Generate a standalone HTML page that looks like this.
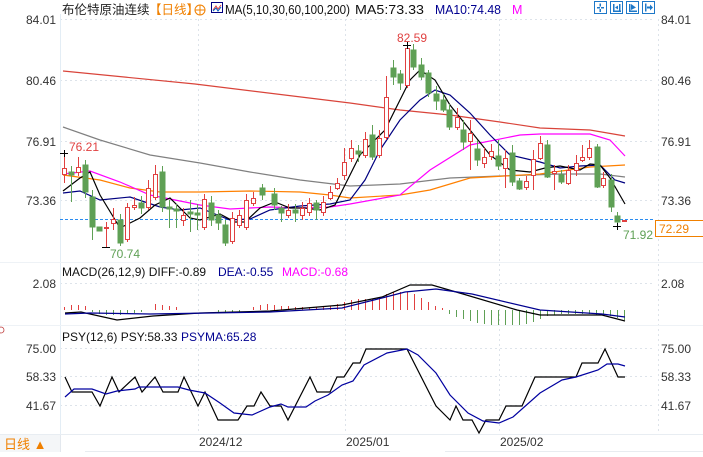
<!DOCTYPE html>
<html><head><meta charset="utf-8"><style>
html,body{margin:0;padding:0;background:#fff;}
body{width:703px;height:452px;overflow:hidden;position:relative;}
svg text{font-family:"Liberation Sans","Noto Sans CJK SC",sans-serif;}
</style></head><body>
<svg width="703" height="452" viewBox="0 0 703 452" xmlns="http://www.w3.org/2000/svg">
<g stroke="#dde3ea" stroke-width="1" stroke-dasharray="2,3" fill="none">
<line x1="60" y1="19.5" x2="655" y2="19.5"/><line x1="60" y1="80.5" x2="655" y2="80.5"/>
<line x1="60" y1="141.5" x2="655" y2="141.5"/><line x1="60" y1="200.5" x2="655" y2="200.5"/>
<line x1="60" y1="283.5" x2="655" y2="283.5"/>
<line x1="60" y1="348.5" x2="655" y2="348.5"/><line x1="60" y1="376.5" x2="655" y2="376.5"/><line x1="60" y1="405.5" x2="655" y2="405.5"/>
<line x1="198.5" y1="19" x2="198.5" y2="434"/><line x1="345.5" y1="19" x2="345.5" y2="434"/><line x1="499.5" y1="19" x2="499.5" y2="434"/>
<line x1="658.5" y1="19" x2="658.5" y2="434"/>
</g>
<line x1="60.5" y1="14" x2="60.5" y2="434" stroke="#e3edf5"/>
<line x1="0" y1="325.5" x2="703" y2="325.5" stroke="#eef2f6"/>
<line x1="0" y1="262.5" x2="703" y2="262.5" stroke="#eef2f6"/>
<line x1="0" y1="434.5" x2="703" y2="434.5" stroke="#e8edf2"/>
<g font-size="12" fill="#333" text-anchor="end">
<text x="56" y="24">84.01</text><text x="56" y="85">80.46</text><text x="56" y="146">76.91</text><text x="56" y="205">73.36</text>
<text x="56" y="288">2.08</text><text x="56" y="353">75.00</text><text x="56" y="381">58.33</text><text x="56" y="410">41.67</text>
</g>
<g font-size="12" fill="#333">
<text x="661" y="24">84.01</text><text x="661" y="85">80.46</text><text x="661" y="146">76.91</text><text x="661" y="205">73.36</text>
<text x="661" y="288">2.08</text><text x="661" y="353">75.00</text><text x="661" y="381">58.33</text><text x="661" y="410">41.67</text>
</g>
<line x1="60" y1="219.5" x2="655" y2="219.5" stroke="#2a8cf0" stroke-dasharray="3,2"/>
<rect x="655.5" y="220.5" width="48" height="16" fill="#fff" stroke="#f08000"/>
<text x="659" y="233" font-size="12" fill="#f08000">72.29</text>

<g fill="none" stroke-width="1.2">
<polyline stroke="#d9443a" points="63,71 195,84 350,103 400,110 450,115 500,122 540,128 590,130 625,136"/>
<polyline stroke="#808080" points="63,127 100,140 150,155 200,163 250,172 300,180 350,186 400,184 450,178 500,176 560,174 600,174 625,177"/>
<polyline stroke="#ff8000" points="63,175 100,180 130,188 160,192 200,192 250,191 300,192 330,195 350,198 400,195 430,190 470,178 540,174 590,167 625,165"/>
<polyline stroke="#ff00ff" points="63,174 90,171 120,182 150,195 200,205 230,209 270,207 300,208 330,207 350,204 400,195 430,170 470,145 520,135 540,134 590,134 610,140 625,156"/>
<polyline stroke="#000080" points="63,193 80,191 100,200 130,197 160,207 180,210 200,208 230,220 250,219 270,210 300,206 330,204 350,200 365,180 380,150 400,120 420,100 435,90 450,95 470,113 490,135 510,155 540,162 560,168 580,166 600,165 615,180 625,183"/>
<polyline stroke="#000" points="63,191 80,178 90,172 100,195 120,228 140,218 155,205 170,198 190,218 200,220 220,214 235,222 245,222 260,208 275,202 290,208 305,208 320,210 335,205 345,185 360,155 385,130 400,100 410,80 420,70 435,80 450,105 470,130 490,155 510,170 530,172 545,168 560,166 580,170 590,164 600,165 610,178 625,204"/>
</g>

<g stroke-width="1">
<g fill="#5fa055" stroke="#5fa055">
<line x1="71.5" y1="166" x2="71.5" y2="202"/><rect x="69" y="172" width="5" height="3"/>
<line x1="85.5" y1="160" x2="85.5" y2="198"/><rect x="83" y="165" width="5" height="27"/>
<line x1="92.5" y1="190" x2="92.5" y2="240"/><rect x="90" y="197" width="5" height="30"/>
<rect x="97" y="227" width="5" height="4"/>
<line x1="120.5" y1="214" x2="120.5" y2="246"/><rect x="118" y="220" width="5" height="23"/>
<line x1="141.5" y1="196" x2="141.5" y2="214"/><rect x="139" y="203" width="5" height="5"/>
<line x1="162.5" y1="166" x2="162.5" y2="212"/><rect x="160" y="172" width="5" height="35"/>
<line x1="169.5" y1="200" x2="169.5" y2="228"/><rect x="167" y="207" width="5" height="2"/>
<line x1="176.5" y1="204" x2="176.5" y2="228"/><rect x="174" y="209" width="5" height="2"/>
<line x1="190.5" y1="200" x2="190.5" y2="232"/><rect x="188" y="212" width="5" height="2"/>
<line x1="197.5" y1="204" x2="197.5" y2="230"/><rect x="195" y="213" width="5" height="2"/>
<line x1="211.5" y1="196" x2="211.5" y2="226"/><rect x="209" y="203" width="5" height="17"/>
<line x1="218.5" y1="210" x2="218.5" y2="230"/><rect x="216" y="215" width="5" height="8"/>
<line x1="225.5" y1="220" x2="225.5" y2="246"/><rect x="223" y="225" width="5" height="18"/>
<line x1="262.5" y1="184" x2="262.5" y2="200"/><rect x="260" y="188" width="5" height="7"/>
<line x1="274.5" y1="188" x2="274.5" y2="210"/><rect x="272" y="194" width="5" height="11"/>
<line x1="281.5" y1="206" x2="281.5" y2="222"/><rect x="279" y="208" width="5" height="5"/>
<line x1="295.5" y1="204" x2="295.5" y2="222"/><rect x="293" y="210" width="5" height="3"/>
<line x1="316.5" y1="200" x2="316.5" y2="220"/><rect x="314" y="203" width="5" height="7"/>
<line x1="358.5" y1="145" x2="358.5" y2="162"/><rect x="356" y="151" width="5" height="3"/>
<line x1="372.5" y1="125" x2="372.5" y2="160"/><rect x="370" y="135" width="5" height="22"/>
<line x1="393.5" y1="60" x2="393.5" y2="85"/><rect x="391" y="68" width="5" height="9"/>
<line x1="400.5" y1="70" x2="400.5" y2="90"/><rect x="398" y="74" width="5" height="9"/>
<line x1="413.5" y1="44" x2="413.5" y2="70"/><rect x="411" y="50" width="5" height="17"/>
<line x1="421.5" y1="58" x2="421.5" y2="80"/><rect x="419" y="65" width="5" height="12"/>
<line x1="428.5" y1="70" x2="428.5" y2="97"/><rect x="426" y="73" width="5" height="20"/>
<line x1="436.5" y1="86" x2="436.5" y2="110"/><rect x="434" y="94" width="5" height="7"/>
<line x1="443.5" y1="94" x2="443.5" y2="112"/><rect x="441" y="100" width="5" height="10"/>
<line x1="449.5" y1="104" x2="449.5" y2="130"/><rect x="447" y="110" width="5" height="17"/>
<line x1="463.5" y1="120" x2="463.5" y2="150"/><rect x="461" y="130" width="5" height="12"/>
<line x1="477.5" y1="140" x2="477.5" y2="166"/><rect x="475" y="149" width="5" height="11"/>
<line x1="498.5" y1="140" x2="498.5" y2="170"/><rect x="496" y="156" width="5" height="10"/>
<line x1="512.5" y1="145" x2="512.5" y2="186"/><rect x="510" y="153" width="5" height="29"/>
<line x1="519.5" y1="178" x2="519.5" y2="190"/><rect x="517" y="181" width="5" height="8"/>
<line x1="547.5" y1="140" x2="547.5" y2="178"/><rect x="545" y="145" width="5" height="32"/>
<line x1="561.5" y1="170" x2="561.5" y2="184"/><rect x="559" y="175" width="5" height="7"/>
<line x1="597.5" y1="144" x2="597.5" y2="188"/><rect x="595" y="147" width="5" height="40"/>
<line x1="611.5" y1="174" x2="611.5" y2="212"/><rect x="609" y="180" width="5" height="27"/>
<line x1="617.5" y1="212" x2="617.5" y2="225"/><rect x="615" y="216" width="5" height="6"/>
</g>
<g fill="#fff" stroke="#e04040">
<line x1="64.5" y1="153" x2="64.5" y2="183"/><rect x="62.5" y="168.5" width="4" height="6"/>
<line x1="78.5" y1="157" x2="78.5" y2="176"/><rect x="76.5" y="167.5" width="4" height="5"/>
<line x1="106.5" y1="222" x2="106.5" y2="248"/><rect x="104.5" y="227.5" width="4" height="1"/>
<line x1="113.5" y1="208" x2="113.5" y2="230"/><rect x="111.5" y="219.5" width="4" height="4"/>
<line x1="127.5" y1="203" x2="127.5" y2="242"/><rect x="125.5" y="207.5" width="4" height="32"/>
<line x1="134.5" y1="197" x2="134.5" y2="210"/><rect x="132.5" y="205.5" width="4" height="2"/>
<line x1="148.5" y1="180" x2="148.5" y2="210"/><rect x="146.5" y="188.5" width="4" height="19"/>
<line x1="155.5" y1="165" x2="155.5" y2="200"/><rect x="153.5" y="174.5" width="4" height="23"/>
<line x1="183.5" y1="208" x2="183.5" y2="226"/><rect x="181.5" y="215.5" width="4" height="5"/>
<line x1="204.5" y1="194" x2="204.5" y2="230"/><rect x="202.5" y="199.5" width="4" height="28"/>
<line x1="232.5" y1="212" x2="232.5" y2="244"/><rect x="230.5" y="218.5" width="4" height="23"/>
<line x1="239.5" y1="210" x2="239.5" y2="228"/><rect x="237.5" y="215.5" width="4" height="10"/>
<line x1="246.5" y1="194" x2="246.5" y2="230"/><rect x="244.5" y="200.5" width="4" height="27"/>
<line x1="253.5" y1="192" x2="253.5" y2="206"/><rect x="251.5" y="198.5" width="4" height="5"/>
<line x1="288.5" y1="204" x2="288.5" y2="218"/><rect x="286.5" y="210.5" width="4" height="5"/>
<line x1="302.5" y1="202" x2="302.5" y2="220"/><rect x="300.5" y="208.5" width="4" height="7"/>
<line x1="309.5" y1="198" x2="309.5" y2="216"/><rect x="307.5" y="203.5" width="4" height="9"/>
<line x1="323.5" y1="196" x2="323.5" y2="216"/><rect x="321.5" y="202.5" width="4" height="10"/>
<line x1="330.5" y1="186" x2="330.5" y2="200"/><rect x="328.5" y="192.5" width="4" height="6"/>
<line x1="337.5" y1="178" x2="337.5" y2="190"/><rect x="335.5" y="183.5" width="4" height="5"/>
<line x1="344.5" y1="148" x2="344.5" y2="180"/><rect x="342.5" y="162.5" width="4" height="13"/>
<line x1="351.5" y1="140" x2="351.5" y2="162"/><rect x="349.5" y="148.5" width="4" height="10"/>
<line x1="365.5" y1="132" x2="365.5" y2="158"/><rect x="363.5" y="139.5" width="4" height="16"/>
<line x1="379.5" y1="130" x2="379.5" y2="158"/><rect x="377.5" y="138.5" width="4" height="17"/>
<line x1="386.5" y1="76" x2="386.5" y2="140"/><rect x="384.5" y="97.5" width="4" height="40"/>
<line x1="407.5" y1="45" x2="407.5" y2="88"/><rect x="405.5" y="48.5" width="4" height="37"/>
<line x1="457.5" y1="108" x2="457.5" y2="130"/><rect x="455.5" y="117.5" width="4" height="10"/>
<line x1="470.5" y1="120" x2="470.5" y2="170"/><rect x="468.5" y="133.5" width="4" height="8"/>
<line x1="484.5" y1="148" x2="484.5" y2="168"/><rect x="482.5" y="157.5" width="4" height="6"/>
<line x1="491.5" y1="144" x2="491.5" y2="160"/><rect x="489.5" y="151.5" width="4" height="5"/>
<line x1="505.5" y1="150" x2="505.5" y2="188"/><rect x="503.5" y="158.5" width="4" height="10"/>
<line x1="526.5" y1="176" x2="526.5" y2="190"/><rect x="524.5" y="181.5" width="4" height="6"/>
<line x1="533.5" y1="150" x2="533.5" y2="190"/><rect x="531.5" y="159.5" width="4" height="16"/>
<line x1="540.5" y1="136" x2="540.5" y2="160"/><rect x="538.5" y="143.5" width="4" height="15"/>
<line x1="554.5" y1="165" x2="554.5" y2="190"/><rect x="552.5" y="171.5" width="4" height="2"/>
<line x1="568.5" y1="165" x2="568.5" y2="185"/><rect x="566.5" y="170.5" width="4" height="13"/>
<line x1="576.5" y1="155" x2="576.5" y2="176"/><rect x="574.5" y="163.5" width="4" height="7"/>
<line x1="582.5" y1="145" x2="582.5" y2="162"/><rect x="580.5" y="157.5" width="4" height="3"/>
<line x1="589.5" y1="140" x2="589.5" y2="160"/><rect x="587.5" y="148.5" width="4" height="9"/>
<line x1="603.5" y1="172" x2="603.5" y2="188"/><rect x="601.5" y="178.5" width="4" height="7"/>
</g>
<rect x="622" y="220" width="5" height="2" fill="#e04040"/>
</g>
<g stroke="#000" stroke-width="1">
<line x1="60" y1="153.5" x2="68" y2="153.5"/><line x1="64.5" y1="150" x2="64.5" y2="157"/>
<line x1="102" y1="247.5" x2="110" y2="247.5"/>
<line x1="403" y1="45.5" x2="411" y2="45.5"/><line x1="407.5" y1="42" x2="407.5" y2="49"/>
<line x1="613" y1="226.5" x2="621" y2="226.5"/><line x1="617.5" y1="223" x2="617.5" y2="230"/>
</g>
<g font-size="12">
<text x="69" y="151" fill="#e04040">76.21</text>
<text x="110" y="258" fill="#5fa055">70.74</text>
<text x="397" y="42" fill="#e04040">82.59</text>
<text x="623" y="239" fill="#5fa055">71.92</text>
</g>

<g font-size="12.5">
<text x="62" y="14" fill="#222">布伦特原油连续</text>
<text x="149" y="14" fill="#f08000">【日线】</text>
</g>
<circle cx="200" cy="10" r="5" fill="none" stroke="#f08000"/>
<line x1="195" y1="10" x2="205" y2="10" stroke="#f08000"/><line x1="200" y1="5" x2="200" y2="15" stroke="#f08000"/>
<rect x="211.5" y="2.5" width="11" height="10" fill="#fff" stroke="#000080"/>
<polyline points="213,10 216,6 218,9 221,5" fill="none" stroke="#e04040"/>
<polyline points="213,11 216,8 218,11 221,7" fill="none" stroke="#0060c0"/>
<g font-size="12.5">
<text x="225" y="14" fill="#111" textLength="125" lengthAdjust="spacingAndGlyphs">MA(5,10,30,60,100,200)</text>
<text x="355" y="14" fill="#111" textLength="69" lengthAdjust="spacingAndGlyphs">MA5:73.33</text>
<text x="435" y="14" fill="#000090" textLength="66" lengthAdjust="spacingAndGlyphs">MA10:74.48</text>
<text x="512" y="14" fill="#ff00ff">M</text>
</g>
<g fill="none" stroke="#1e78c8" stroke-width="1">
<rect x="594.5" y="1.5" width="12" height="12"/><rect x="610.5" y="1.5" width="12" height="12"/>
<rect x="626.5" y="1.5" width="12" height="12"/><rect x="642.5" y="1.5" width="12" height="12"/>
</g>
<g fill="#1e78c8">
<rect x="597" y="7" width="3" height="1.5"/><rect x="601" y="7" width="3" height="1.5"/><rect x="599.5" y="3.5" width="1.5" height="3"/><rect x="599.5" y="9" width="1.5" height="3"/>
<rect x="613" y="4" width="1.5" height="8"/><rect x="619" y="4" width="1.5" height="8"/><rect x="613" y="10.5" width="8" height="1.5"/><polygon points="615,7.5 618,5.5 618,9.5"/>
<rect x="629" y="4" width="1.5" height="8"/><rect x="629" y="10.5" width="8" height="1.5"/><polygon points="631,4 636,7.5 631,10"/>
<rect x="645" y="3.5" width="1.5" height="8"/><rect x="647" y="6.5" width="4" height="2"/><polygon points="650,4.5 653,7.5 650,10.5"/>
</g>

<g font-size="12">
<text x="62" y="276" fill="#111">MACD(26,12,9) DIFF:-0.89</text>
<text x="218" y="276" fill="#000090">DEA:-0.55</text>
<text x="282" y="276" fill="#ff00ff">MACD:-0.68</text>
</g>
<g stroke-width="1">
<g stroke="#e04040">
<line x1="64.5" y1="310" x2="64.5" y2="307"/><line x1="71.5" y1="310" x2="71.5" y2="305"/><line x1="78.5" y1="310" x2="78.5" y2="305"/><line x1="85.5" y1="310" x2="85.5" y2="306"/>
<line x1="155.5" y1="310" x2="155.5" y2="304"/><line x1="162.5" y1="310" x2="162.5" y2="305"/><line x1="169.5" y1="310" x2="169.5" y2="306"/><line x1="176.5" y1="310" x2="176.5" y2="307"/>
<line x1="253.5" y1="310" x2="253.5" y2="307"/><line x1="260.5" y1="310" x2="260.5" y2="305"/><line x1="267.5" y1="310" x2="267.5" y2="304"/><line x1="274.5" y1="310" x2="274.5" y2="305"/><line x1="281.5" y1="310" x2="281.5" y2="306"/><line x1="288.5" y1="310" x2="288.5" y2="306"/><line x1="295.5" y1="310" x2="295.5" y2="307"/><line x1="302.5" y1="310" x2="302.5" y2="307"/><line x1="309.5" y1="310" x2="309.5" y2="307"/><line x1="316.5" y1="310" x2="316.5" y2="307"/><line x1="323.5" y1="310" x2="323.5" y2="307"/><line x1="330.5" y1="310" x2="330.5" y2="306"/>
<line x1="337.5" y1="310" x2="337.5" y2="304"/><line x1="344.5" y1="310" x2="344.5" y2="302"/><line x1="351.5" y1="310" x2="351.5" y2="300"/><line x1="358.5" y1="310" x2="358.5" y2="299"/><line x1="365.5" y1="310" x2="365.5" y2="299"/><line x1="372.5" y1="310" x2="372.5" y2="299"/><line x1="379.5" y1="310" x2="379.5" y2="297"/><line x1="386.5" y1="310" x2="386.5" y2="294"/><line x1="393.5" y1="310" x2="393.5" y2="292"/><line x1="400.5" y1="310" x2="400.5" y2="292"/><line x1="407.5" y1="310" x2="407.5" y2="292"/><line x1="414.5" y1="310" x2="414.5" y2="294"/><line x1="421.5" y1="310" x2="421.5" y2="298"/><line x1="428.5" y1="310" x2="428.5" y2="302"/><line x1="435.5" y1="310" x2="435.5" y2="306"/><line x1="442.5" y1="310" x2="442.5" y2="308"/>
</g>
<g stroke="#5fa055">
<line x1="92.5" y1="310" x2="92.5" y2="312"/><line x1="99.5" y1="310" x2="99.5" y2="314"/><line x1="106.5" y1="310" x2="106.5" y2="315"/><line x1="113.5" y1="310" x2="113.5" y2="315"/><line x1="120.5" y1="310" x2="120.5" y2="315"/><line x1="127.5" y1="310" x2="127.5" y2="314"/><line x1="134.5" y1="310" x2="134.5" y2="313"/><line x1="141.5" y1="310" x2="141.5" y2="312"/>
<line x1="218.5" y1="310" x2="218.5" y2="312"/><line x1="225.5" y1="310" x2="225.5" y2="313"/><line x1="232.5" y1="310" x2="232.5" y2="313"/><line x1="239.5" y1="310" x2="239.5" y2="312"/>
<line x1="449.5" y1="310" x2="449.5" y2="314"/><line x1="456.5" y1="310" x2="456.5" y2="317"/><line x1="463.5" y1="310" x2="463.5" y2="319"/><line x1="470.5" y1="310" x2="470.5" y2="321"/><line x1="477.5" y1="310" x2="477.5" y2="323"/><line x1="484.5" y1="310" x2="484.5" y2="324"/><line x1="491.5" y1="310" x2="491.5" y2="325"/><line x1="498.5" y1="310" x2="498.5" y2="325"/><line x1="505.5" y1="310" x2="505.5" y2="325"/><line x1="512.5" y1="310" x2="512.5" y2="325"/><line x1="519.5" y1="310" x2="519.5" y2="325"/><line x1="526.5" y1="310" x2="526.5" y2="324"/><line x1="533.5" y1="310" x2="533.5" y2="322"/><line x1="540.5" y1="310" x2="540.5" y2="319"/><line x1="547.5" y1="310" x2="547.5" y2="316"/><line x1="554.5" y1="310" x2="554.5" y2="315"/><line x1="561.5" y1="310" x2="561.5" y2="314"/><line x1="568.5" y1="310" x2="568.5" y2="314"/><line x1="575.5" y1="310" x2="575.5" y2="314"/><line x1="582.5" y1="310" x2="582.5" y2="314"/><line x1="589.5" y1="310" x2="589.5" y2="314"/><line x1="596.5" y1="310" x2="596.5" y2="315"/><line x1="603.5" y1="310" x2="603.5" y2="315"/><line x1="610.5" y1="310" x2="610.5" y2="316"/><line x1="617.5" y1="310" x2="617.5" y2="318"/><line x1="624.5" y1="310" x2="624.5" y2="320"/>
</g>
</g>
<polyline fill="none" stroke="#000" stroke-width="1.2" points="65,313 81,312 117,320 153,316 200,313 270,311 342,305 382,297 410,285 432,285 463,294 517,310 540,315 602,315 625,321"/>
<polyline fill="none" stroke="#000090" stroke-width="1.2" points="65,314 90,313 150,314 270,312 342,308 382,298 405,292 436,289 472,294 540,310 602,314 625,317"/>

<g font-size="12">
<text x="62" y="341" fill="#111">PSY(12,6) PSY:58.33</text>
<text x="181" y="341" fill="#000090">PSYMA:65.28</text>
</g>
<polyline fill="none" stroke="#000" stroke-width="1.2" points="65,377 72,392 92,392 100,406 112,377 119,392 135,377 142,392 155,377 163,392 178,392 184,377 198,406 205,392 218,420 238,420 247,406 254,406 261,392 270,406 281,406 288,420 310,377 317,392 330,392 337,377 344,377 353,363 360,363 366,349 407,349 436,406 450,420 456,406 463,420 472,420 479,433 486,420 499,420 506,406 522,406 535,377 576,377 582,363 598,363 605,349 618,377 625,377"/>
<polyline fill="none" stroke="#0000a0" stroke-width="1.2" points="65,397 74,389 92,389 106,394 117,391 135,389 139,387 178,387 189,390 205,393 220,403 234,413 252,415 270,407 281,404 288,407 306,407 315,401 328,395 342,385 353,381 364,365 387,353 407,349 418,355 436,373 450,395 468,413 483,421 499,423 513,417 540,393 562,380 576,377 598,370 607,364 618,364 625,366"/>

<rect x="0" y="435" width="60" height="17" fill="#f4f6f8"/>
<line x1="60.5" y1="435" x2="60.5" y2="452" stroke="#e3e8ee"/>
<text x="4" y="449" font-size="13" fill="#f08000">日线 ▲</text>
<g font-size="12" fill="#333">
<text x="199" y="446">2024/12</text><text x="346" y="446">2025/01</text><text x="500" y="446">2025/02</text>
</g>
<line x1="85" y1="451.5" x2="400" y2="451.5" stroke="#e8ecf0"/>
<line x1="445" y1="451.5" x2="703" y2="451.5" stroke="#e8ecf0"/>
<circle cx="1" cy="330" r="3" fill="none" stroke="#c04040" stroke-width="0.8"/>
</svg>
</body></html>
